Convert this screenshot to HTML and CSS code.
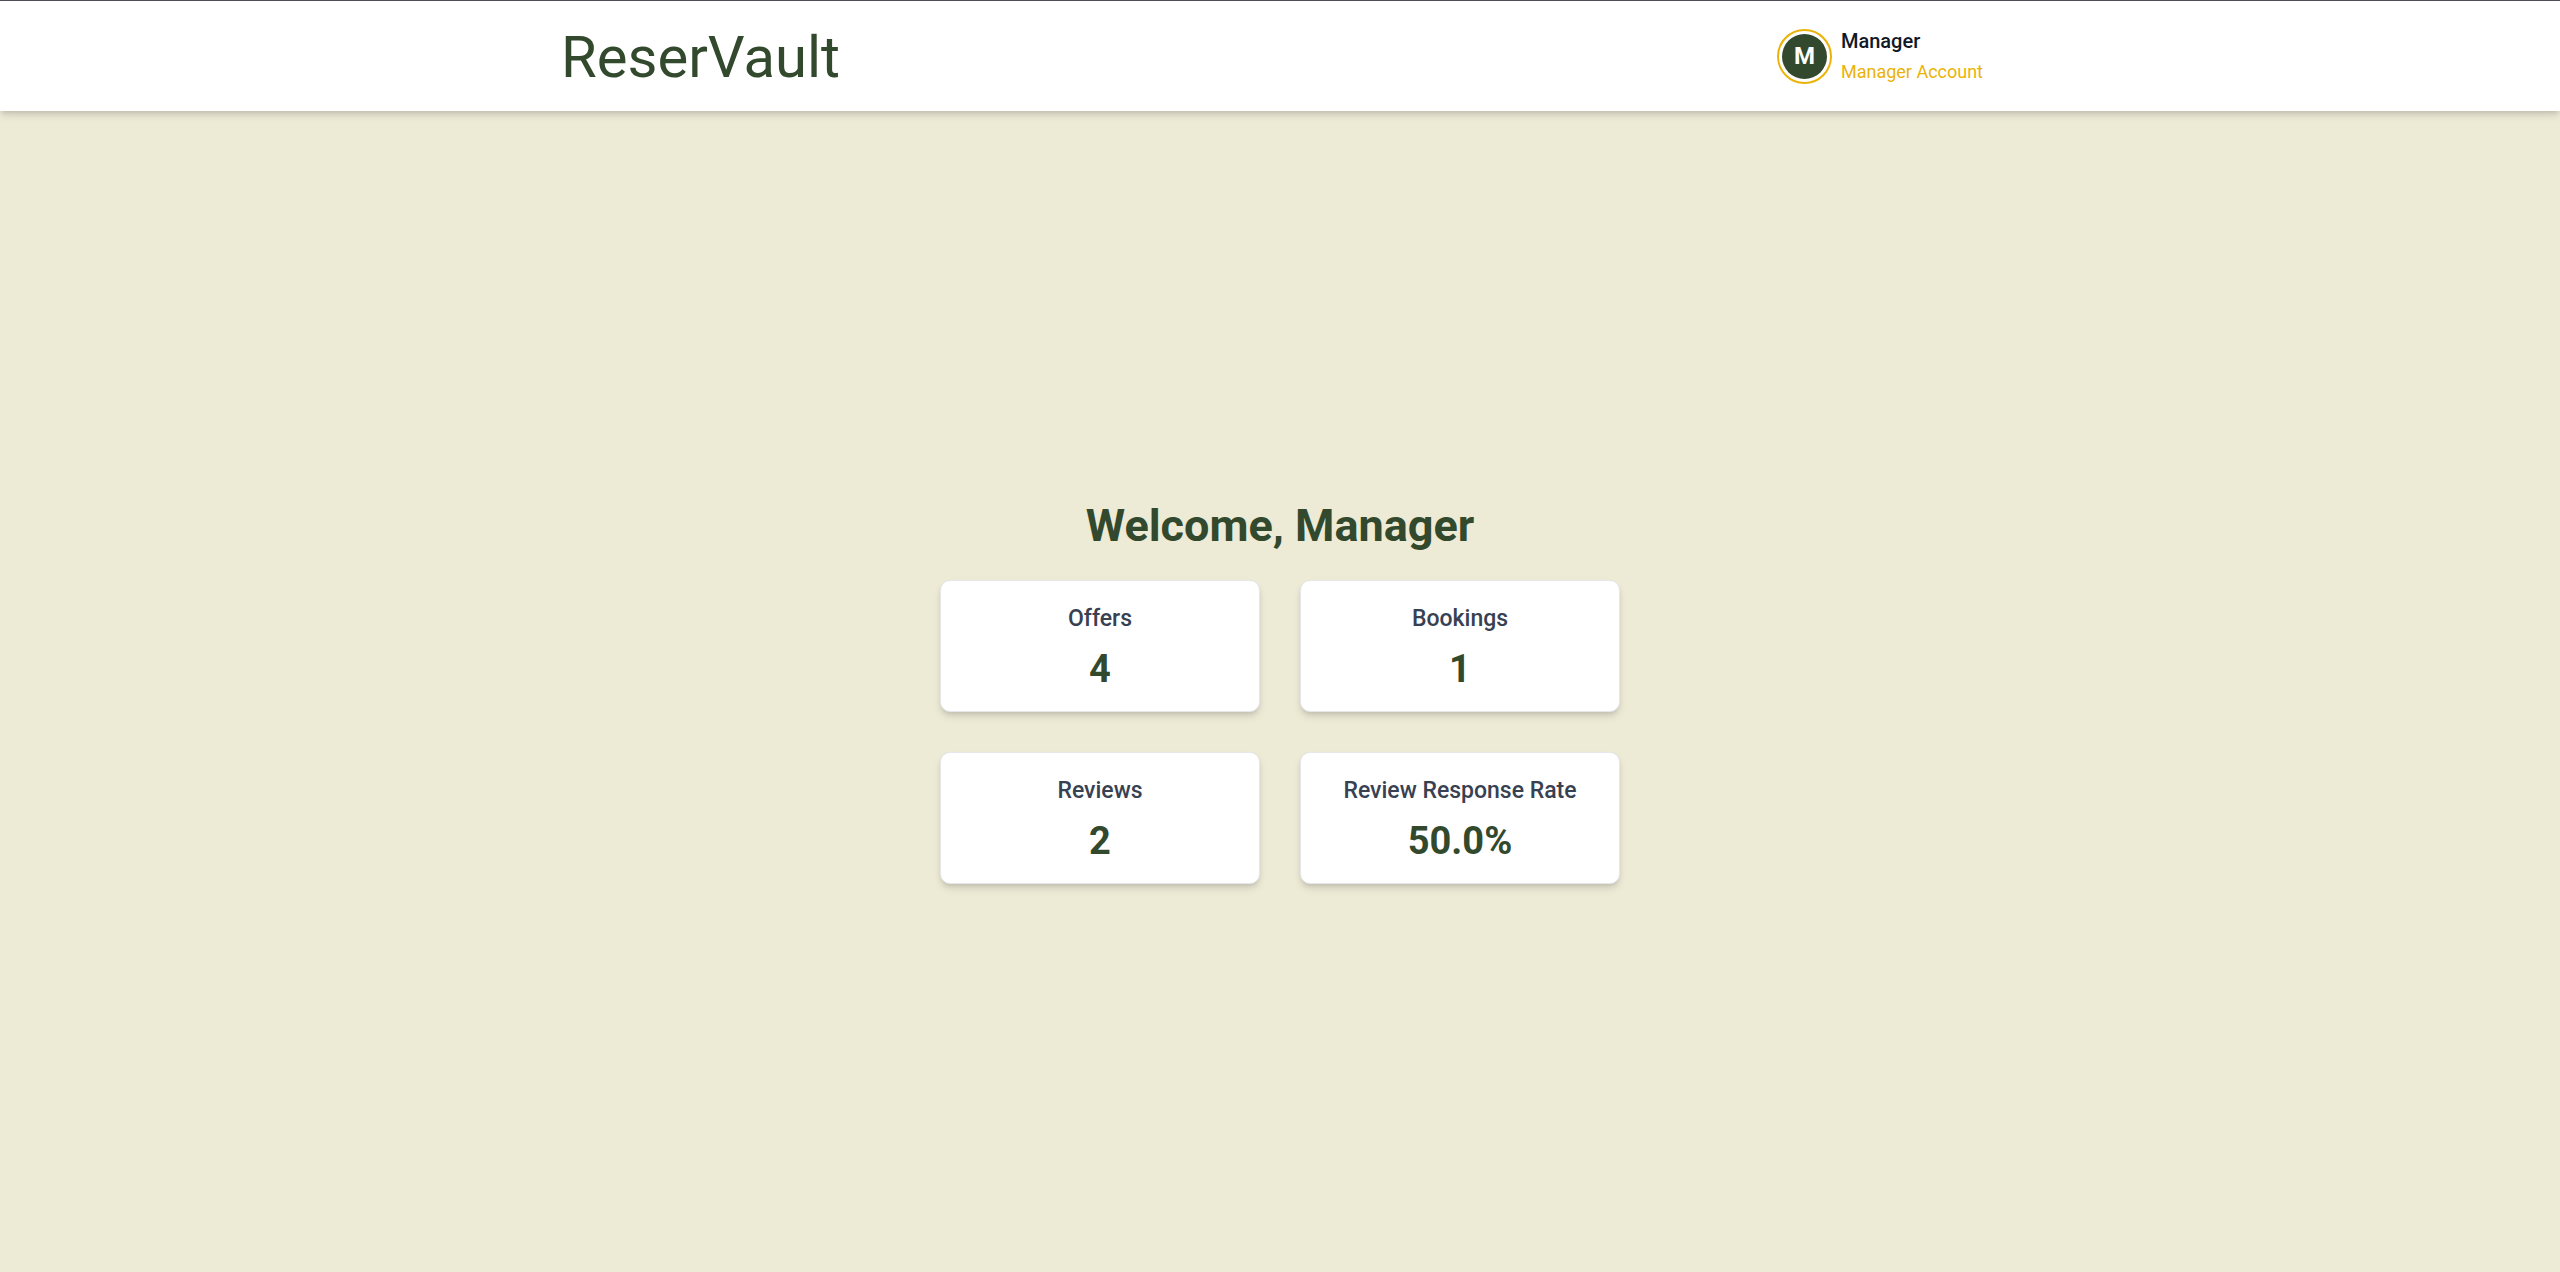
FILE: index.html
```html
<!DOCTYPE html>
<html lang="en">
<head>
<meta charset="utf-8">
<meta name="viewport" content="width=device-width, initial-scale=1">
<title>ReserVault</title>
<link rel="stylesheet" href="styles.css">
</head>
<body>
<header class="navbar">
  <div class="navbar-inner">
    <a class="brand" href="#">ReserVault</a>
    <div class="account">
      <span class="avatar">M</span>
      <div class="account-text">
        <span class="account-name">Manager</span>
        <span class="account-role">Manager Account</span>
      </div>
    </div>
  </div>
</header>
<main class="dashboard">
  <h1 class="welcome">Welcome, Manager</h1>
  <div class="stats">
    <section class="card"><h2 class="card-title">Offers</h2><p class="card-value">4</p></section>
    <section class="card"><h2 class="card-title">Bookings</h2><p class="card-value">1</p></section>
    <section class="card"><h2 class="card-title">Reviews</h2><p class="card-value">2</p></section>
    <section class="card"><h2 class="card-title">Review Response Rate</h2><p class="card-value">50.0%</p></section>
  </div>
</main>
</body>
</html>
```
FILE: styles.css
```css
* { box-sizing: border-box; margin: 0; }
body {
  min-height: 100vh;
  display: flex;
  flex-direction: column;
  background: #edead6;
  font-family: Roboto, sans-serif;
  line-height: 24px;
}
.navbar {
  border-top: 1px solid #504c58;
  background: #fff;
  box-shadow: 0 5px 8px -1px rgba(0, 0, 0, .12), 0 3px 5px -2px rgba(0, 0, 0, .12);
}
.navbar-inner {
  max-width: 1536px;
  min-height: 110px;
  margin: 0 auto;
  padding: 0 65px 0 49px;
  display: flex;
  align-items: center;
  justify-content: space-between;
}
.brand {
  padding-top: 2px;
  color: #33492d;
  font-size: 58px;
  line-height: 60px;
  text-decoration: none;
}
.account { display: flex; align-items: center; gap: 9px; }
.avatar {
  width: 55px;
  height: 55px;
  border: 2px solid #eab308;
  border-radius: 50%;
  background: #33492d content-box;
  padding: 3px;
  display: grid;
  place-items: center;
  color: #fff;
  font-size: 24px;
  font-weight: 700;
}
.account-text { display: flex; flex-direction: column; gap: 7px; }
.account-name { color: #111827; font-size: 20px; font-weight: 500; }
.account-role { color: #eab308; font-size: 18px; }
.dashboard {
  flex: 1;
  display: flex;
  flex-direction: column;
  align-items: center;
  justify-content: center;
  gap: 28px;
  padding: 24px;
}
.welcome { color: #33492d; font-size: 45px; line-height: 52px; font-weight: 700; }
.stats {
  width: 100%;
  max-width: 680px;
  display: grid;
  grid-template-columns: 1fr 1fr;
  gap: 40px;
}
.card {
  padding: 21px 16px 18px;
  border: 1px solid #e5e7eb;
  border-radius: 10px;
  background: #fff;
  box-shadow: 0 5px 8px -1px rgba(0, 0, 0, .12), 0 3px 5px -2px rgba(0, 0, 0, .12);
  text-align: center;
}
.card-title { color: #374151; font-size: 23px; line-height: 34px; font-weight: 500; }
.card-value { margin-top: 9px; color: #33492d; font-size: 38px; line-height: 48px; font-weight: 700; }
```
